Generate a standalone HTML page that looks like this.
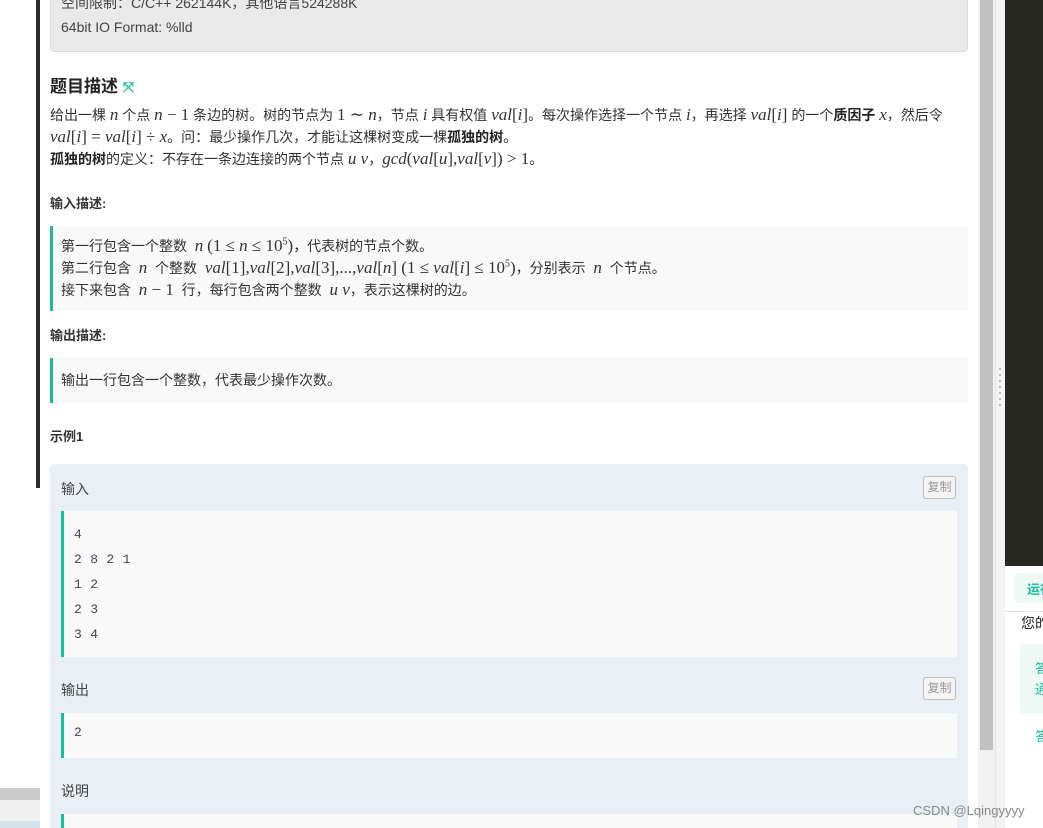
<!DOCTYPE html>
<html style="overflow:hidden;height:828px"><head><meta charset="utf-8"><style>
*{margin:0;padding:0;box-sizing:border-box}
body{width:1043px;height:828px;overflow:hidden;background:#fff;position:relative;font-family:"Liberation Sans","Noto Sans CJK SC",sans-serif;font-size:14px;color:#333}
.a{position:absolute;white-space:nowrap}
.m{font-family:"Liberation Serif",serif;font-style:italic;font-size:17px}
.r{font-family:"Liberation Serif",serif;font-size:17px}
b{font-weight:bold;color:#222}
.code{font-family:"Liberation Mono",monospace;font-size:13px;color:#445;letter-spacing:0.3px}
.btn{position:absolute;right:12px;width:33px;height:23px;border:1px solid #bbb;border-radius:3px;font-size:12px;color:#999;text-align:center;line-height:21px;background:#f4f4f4}
</style></head><body>
<div class="a" style="left:36px;top:0;width:4px;height:488px;background:#2b2b2b"></div>
<div class="a" style="left:50px;top:-10px;width:918px;height:62px;background:#e9e9e9;border:1px solid #ddd;border-radius:4px"></div>
<div class="a" style="left:61px;top:-7px;font-size:14px;color:#444">空间限制：C/C++ 262144K，其他语言524288K</div>
<div class="a" style="left:61px;top:19px;font-size:14px;color:#444">64bit IO Format: %lld</div>
<div class="a" style="left:50px;top:72px;font-size:17px;font-weight:bold;color:#222">题目描述 <span style="color:#2bbf9c;font-size:14px">⤧</span></div>
<div class="a" style="left:50px;top:104px;width:920px;line-height:21px;font-size:14px">给出一棵 <span class="m">n</span> 个点 <span class="m">n</span><span class="r"> − 1</span> 条边的树。树的节点为 <span class="r">1 ∼ </span><span class="m">n</span>，节点 <span class="m">i</span> 具有权值 <span class="m">val</span><span class="r">[</span><span class="m">i</span><span class="r">]</span>。每次操作选择一个节点 <span class="m">i</span>，再选择 <span class="m">val</span><span class="r">[</span><span class="m">i</span><span class="r">]</span> 的一个<b>质因子</b> <span class="m">x</span>，然后令<br><span class="m">val</span><span class="r">[</span><span class="m">i</span><span class="r">] = </span><span class="m">val</span><span class="r">[</span><span class="m">i</span><span class="r">] ÷ </span><span class="m">x</span>。问：最少操作几次，才能让这棵树变成一棵<b>孤独的树</b>。<br><b>孤独的树</b>的定义：不存在一条边连接的两个节点 <span class="m">u v</span>，<span class="m">gcd</span><span class="r">(</span><span class="m">val</span><span class="r">[</span><span class="m">u</span><span class="r">],</span><span class="m">val</span><span class="r">[</span><span class="m">v</span><span class="r">]) &gt; 1</span>。</div>
<div class="a" style="left:50px;top:193px;font-weight:bold;color:#333;font-size:13px">输入描述:</div>
<div class="a" style="left:50px;top:226px;width:918px;height:85px;background:#f9f9f9;border-left:3px solid #1abc9c"></div>
<div class="a" style="left:61px;top:235px;line-height:21px">第一行包含一个整数 &nbsp;<span class="m">n</span> <span class="r">(1 ≤ </span><span class="m">n</span><span class="r"> ≤ 10<sup style="font-size:10px;line-height:0">5</sup>)</span>，代表树的节点个数。<br>第二行包含 &nbsp;<span class="m">n</span> &nbsp;个整数 &nbsp;<span class="m">val</span><span class="r">[1],</span><span class="m">val</span><span class="r">[2],</span><span class="m">val</span><span class="r">[3],...,</span><span class="m">val</span><span class="r">[</span><span class="m">n</span><span class="r">] (1 ≤ </span><span class="m">val</span><span class="r">[</span><span class="m">i</span><span class="r">] ≤ 10<sup style="font-size:10px;line-height:0">5</sup>)</span>，分别表示 &nbsp;<span class="m">n</span> &nbsp;个节点。<br>接下来包含 &nbsp;<span class="m">n</span><span class="r"> − 1</span> &nbsp;行，每行包含两个整数 &nbsp;<span class="m">u v</span>，表示这棵树的边。</div>
<div class="a" style="left:50px;top:325px;font-weight:bold;color:#333;font-size:13px">输出描述:</div>
<div class="a" style="left:50px;top:358px;width:918px;height:45px;background:#f9f9f9;border-left:3px solid #1abc9c"></div>
<div class="a" style="left:61px;top:370px">输出一行包含一个整数，代表最少操作次数。</div>
<div class="a" style="left:50px;top:426px;font-weight:bold;color:#333;font-size:13px">示例1</div>
<div class="a" style="left:50px;top:464px;width:918px;height:380px;background:#eaeff5;border-radius:4px">
 <div class="a" style="left:11px;top:15px;color:#444">输入</div>
 <div class="btn" style="top:12px">复制</div>
 <div class="a" style="left:11px;top:47px;width:896px;height:146px;background:#f9f9f9;border-left:3px solid #1abc9c"></div>
 <div class="a code" style="left:24px;top:58px;line-height:25px;white-space:pre">4
2 8 2 1
1 2
2 3
3 4</div>
 <div class="a" style="left:11px;top:216px;color:#444">输出</div>
 <div class="btn" style="top:213px">复制</div>
 <div class="a" style="left:11px;top:249px;width:896px;height:45px;background:#f9f9f9;border-left:3px solid #1abc9c"></div>
 <div class="a code" style="left:24px;top:261px">2</div>
 <div class="a" style="left:11px;top:317px;color:#444">说明</div>
 <div class="a" style="left:11px;top:350px;width:896px;height:40px;background:#f9f9f9;border-left:3px solid #1abc9c"></div>
</div>
<div class="a" style="left:0;top:788px;width:40px;height:12px;background:#ccc"></div>
<div class="a" style="left:0;top:800px;width:40px;height:21px;background:#f0f0f0"></div>
<div class="a" style="left:0;top:821px;width:40px;height:7px;background:#d6e2ea"></div>
<div class="a" style="left:978px;top:0;width:17px;height:828px;background:#f1f1f1"></div>
<div class="a" style="left:980px;top:0;width:13px;height:750px;background:#c1c1c1"></div>
<div class="a" style="left:995px;top:0;width:10px;height:828px;background:#f3f3f5;border-left:1px solid #e4e4e4"></div>
<div class="a" style="left:999px;top:368px;width:2px;height:40px;background:repeating-linear-gradient(#bbb 0 2px,transparent 2px 6px)"></div>
<div class="a" style="left:1005px;top:0;width:38px;height:566px;background:#272822"></div>
<div class="a" style="left:1015px;top:573px;width:60px;height:30px;background:#eef8f5;border-radius:4px;color:#1abc9c;padding:6px 12px;font-size:13px;font-weight:bold">运行</div>
<div class="a" style="left:1005px;top:611px;width:38px;height:1px;background:#e5e5e5"></div>
<div class="a" style="left:1021px;top:613px;color:#222">您的</div>
<div class="a" style="left:1020px;top:644px;width:60px;height:70px;background:#eef8f5;border-radius:4px;color:#1abc9c;padding:14px 15px;line-height:21px;white-space:normal;font-size:13px">答<br>通</div>
<div class="a" style="left:1035px;top:726px;color:#1abc9c;font-size:13px">答</div>
<div class="a" style="left:913px;top:803px;font-size:13px;color:#888">CSDN @Lqingyyyy</div>
</body></html>
